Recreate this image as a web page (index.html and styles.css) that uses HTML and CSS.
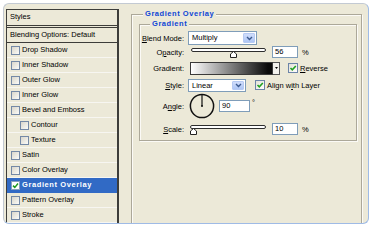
FILE: index.html
```html
<!DOCTYPE html>
<html>
<head>
<meta charset="utf-8">
<title>Layer Style - Gradient Overlay</title>
<link rel="stylesheet" href="styles.css">
</head>
<body>
<div class="frame">
  <div class="list">
    <div class="li head">Styles</div>
    <div class="li blendopt">Blending Options: Default</div>
    <div class="li"><span class="cb"></span>Drop Shadow</div>
    <div class="li"><span class="cb"></span>Inner Shadow</div>
    <div class="li"><span class="cb"></span>Outer Glow</div>
    <div class="li"><span class="cb"></span>Inner Glow</div>
    <div class="li"><span class="cb"></span>Bevel and Emboss</div>
    <div class="li sub"><span class="cb"></span>Contour</div>
    <div class="li sub"><span class="cb"></span>Texture</div>
    <div class="li"><span class="cb"></span>Satin</div>
    <div class="li"><span class="cb"></span>Color Overlay</div>
    <div class="li sel"><span class="cb on"><svg width="7" height="7" viewBox="0 0 7 7"><path d="M1 3.6 L2.8 5.4 L6 1.6" fill="none" stroke="#1f9a1f" stroke-width="1.5"/></svg></span>Gradient Overlay</div>
    <div class="li"><span class="cb"></span>Pattern Overlay</div>
    <div class="li"><span class="cb"></span>Stroke</div>
  </div>

  <div class="group outer">
    <div class="gtitle">Gradient Overlay</div>
    <div class="group inner">
      <div class="gtitle">Gradient</div>

      <div class="row r-blend">
        <span class="lbl"><u>B</u>lend Mode:</span>
        <div class="select sel-blend"><span class="val">Multiply</span><span class="dd"><svg width="7" height="5" viewBox="0 0 7 5"><path d="M1 1 L3.5 3.5 L6 1" fill="none" stroke="#3c5a8f" stroke-width="1.4"/></svg></span></div>
      </div>

      <div class="row r-opacity">
        <span class="lbl">O<u>p</u>acity:</span>
        <div class="slider sl-opacity"><div class="track"></div><svg class="thumb t-56" width="7" height="7" viewBox="0 0 7 7"><path d="M0.5 6.5 V3 L3.5 0.5 L6.5 3 V6.5 Z" fill="#fff" stroke="#222"/></svg></div>
        <div class="input in-num">56</div>
        <span class="unit">%</span>
      </div>

      <div class="row r-gradient">
        <span class="lbl">Gradient:</span>
        <div class="swatch"></div>
        <div class="gbtn"><svg width="3" height="2" viewBox="0 0 3 2"><path d="M0 0 H3 L1.5 2 Z" fill="#000"/></svg></div>
        <span class="chk ck-rev"><svg width="8" height="8" viewBox="0 0 8 8"><path d="M1.5 4 L3.3 5.8 L6.8 2" fill="none" stroke="#21a121" stroke-width="1.6"/></svg></span>
        <span class="ctext"><u>R</u>everse</span>
      </div>

      <div class="row r-style">
        <span class="lbl"><u>S</u>tyle:</span>
        <div class="select sel-style"><span class="val">Linear</span><span class="dd"><svg width="7" height="5" viewBox="0 0 7 5"><path d="M1 1 L3.5 3.5 L6 1" fill="none" stroke="#3c5a8f" stroke-width="1.4"/></svg></span></div>
        <span class="chk ck-align"><svg width="8" height="8" viewBox="0 0 8 8"><path d="M1.5 4 L3.3 5.8 L6.8 2" fill="none" stroke="#21a121" stroke-width="1.6"/></svg></span>
        <span class="ctext">Align w<u>i</u>th Layer</span>
      </div>

      <div class="row r-angle">
        <span class="lbl">A<u>n</u>gle:</span>
        <svg class="dial" width="26" height="26" viewBox="0 0 26 26"><circle cx="13" cy="13" r="11.6" fill="none" stroke="#111" stroke-width="1.5"/><line x1="13" y1="13" x2="13" y2="2" stroke="#111" stroke-width="1.2"/><circle cx="13" cy="13" r="1" fill="#111"/></svg>
        <div class="input in-angle">90</div>
        <span class="deg">°</span>
      </div>

      <div class="row r-scale">
        <span class="lbl"><u>S</u>cale:</span>
        <div class="slider sl-scale"><div class="track"></div><svg class="thumb t-10" width="7" height="7" viewBox="0 0 7 7"><path d="M0.5 6.5 V3 L3.5 0.5 L6.5 3 V6.5 Z" fill="#fff" stroke="#222"/></svg></div>
        <div class="input in-num">10</div>
        <span class="unit">%</span>
      </div>
    </div>
  </div>
</div>
</body>
</html>
```

FILE: styles.css
```css
* { box-sizing: border-box; margin: 0; padding: 0; }

body {
  margin: 0;
  background: #ffffff;
  font-family: "Liberation Sans", Arial, sans-serif;
  font-size: 7.5px;
  color: #000;
}

u { text-decoration: underline; text-underline-offset: 1px; }

.frame {
  margin: 3px 0 0 3px;
  width: 366px;
  height: 221px;
  border: 1px solid;
  border-color: #c3cad3 #9fbbe6 #9fbbe6 #c3cad3;
  border-radius: 6px;
  background: #ece9d8;
  overflow: hidden;
  display: flex;
  align-items: flex-start;
}

/* ---------- left styles list ---------- */
.list {
  margin: 5px 0 0 2px;
  width: 113px;
  flex: none;
  border: 1px solid #3d3d3a;
  border-right-width: 2px;
  border-bottom: none;
}

.li {
  display: flex;
  align-items: center;
  height: 15px;
  padding-left: 4px;
  line-height: 14px;
  border-bottom: 1px solid #f7f6f1;
  white-space: nowrap;
}

.li.head {
  height: 18px;
  padding-left: 3px;
  border-bottom: 3px double #3d3d3a;
  padding-bottom: 1px;
}

.li.blendopt {
  height: 15px;
  padding-left: 3px;
  border-bottom: 1px solid #3d3d3a;
}

.li.sub { padding-left: 13px; }

.li.sel {
  background: #316ac5;
  color: #fff;
  font-weight: bold;
  letter-spacing: 0.6px;
  border-bottom-color: #316ac5;
}

.cb {
  width: 9px;
  height: 9px;
  flex: none;
  margin-right: 2px;
  border: 1px solid #7489a6;
  background: linear-gradient(135deg, #d9d6cb, #fbfbf8);
  display: flex;
  align-items: center;
  justify-content: center;
}

.cb.on { background: #fff; border-color: #8aa0bd; }

/* ---------- group boxes ---------- */
.group {
  position: relative;
  border: 1px solid #aca899;
  box-shadow: 1px 1px 0 #fbfaf6, inset 1px 1px 0 #fbfaf6;
}

.outer {
  margin: 10px 0 0 12px;
  width: 231px;
  height: 230px;
  flex: none;
  padding: 9px 0 0 7px;
}

.inner {
  width: 218px;
  height: 117px;
  padding-top: 6px;
  display: flex;
  flex-direction: column;
}

.gtitle {
  position: absolute;
  top: -6px;
  height: 10px;
  line-height: 10px;
  padding: 0 2px;
  background: #ece9d8;
  color: #0c46d6;
  font-weight: bold;
  letter-spacing: 0.55px;
}

.outer > .gtitle { left: 11px; }
.inner > .gtitle { left: 10px; }

/* ---------- form rows ---------- */
.row {
  display: flex;
  align-items: center;
  height: 14px;
  flex: none;
}

.lbl {
  width: 44px;
  flex: none;
  text-align: right;
  white-space: nowrap;
}

.r-gradient { height: 16px; margin-top: 1px; }
.r-style { margin-top: 2px; }
.r-angle { height: 26px; margin-top: 1px; }
.r-scale { margin-top: 3px; }

.select {
  display: flex;
  align-items: stretch;
  height: 14px;
  border: 1px solid #7f9db9;
  background: #fff;
  padding: 1px;
}

.select .val {
  flex: 1;
  padding-left: 2px;
  line-height: 10px;
}

.select .dd {
  width: 12px;
  flex: none;
  border-radius: 1px;
  background: linear-gradient(#d0ddfb, #aec6f5);
  border: 1px solid #b6caf3;
  display: flex;
  align-items: center;
  justify-content: center;
}

.sel-blend { margin-left: 4px; width: 69px; }
.sel-style { margin-left: 4px; width: 58px; height: 13px; }

.slider {
  position: relative;
  height: 10px;
  flex: none;
}

.slider .track {
  height: 4px;
  border: 1px solid #2e2e2e;
  border-radius: 2px;
  background: #fff;
}

.slider .thumb { position: absolute; top: 3px; }

.sl-opacity { margin-left: 7px; width: 75px; margin-top: 2px; }
.sl-scale { margin-left: 6px; width: 76px; margin-top: 2px; }
.t-56 { left: 39px; }
.t-10 { left: 0; }

.input {
  height: 12px;
  border: 1px solid #7f9db9;
  background: #fff;
  padding-left: 2px;
  line-height: 10px;
  flex: none;
}

.in-num { margin-left: 6px; width: 26px; }
.in-angle { margin-left: 4px; width: 31px; }

.unit { margin-left: 4px; }

.deg { margin-left: 2px; align-self: center; margin-bottom: 7px; }

.swatch {
  margin-left: 6px;
  width: 83px;
  height: 13px;
  flex: none;
  border: 1px solid #3a3a3a;
  background: linear-gradient(to right, #ffffff 0%, #8a8a8a 45%, #0a0a0a 95%);
}

.gbtn {
  width: 7px;
  height: 13px;
  flex: none;
  border: 1px solid #555;
  border-left: none;
  background: #f4f3ee;
  display: flex;
  align-items: center;
  justify-content: center;
}

.chk {
  width: 10px;
  height: 10px;
  flex: none;
  border: 1px solid #6c84a8;
  background: linear-gradient(135deg, #e2e0d6, #ffffff);
  display: flex;
  align-items: center;
  justify-content: center;
}

.ck-rev { margin-left: 8px; }
.ck-align { margin-left: 9px; }

.ctext { margin-left: 2px; white-space: nowrap; }

.dial { margin-left: 5px; flex: none; }
```
